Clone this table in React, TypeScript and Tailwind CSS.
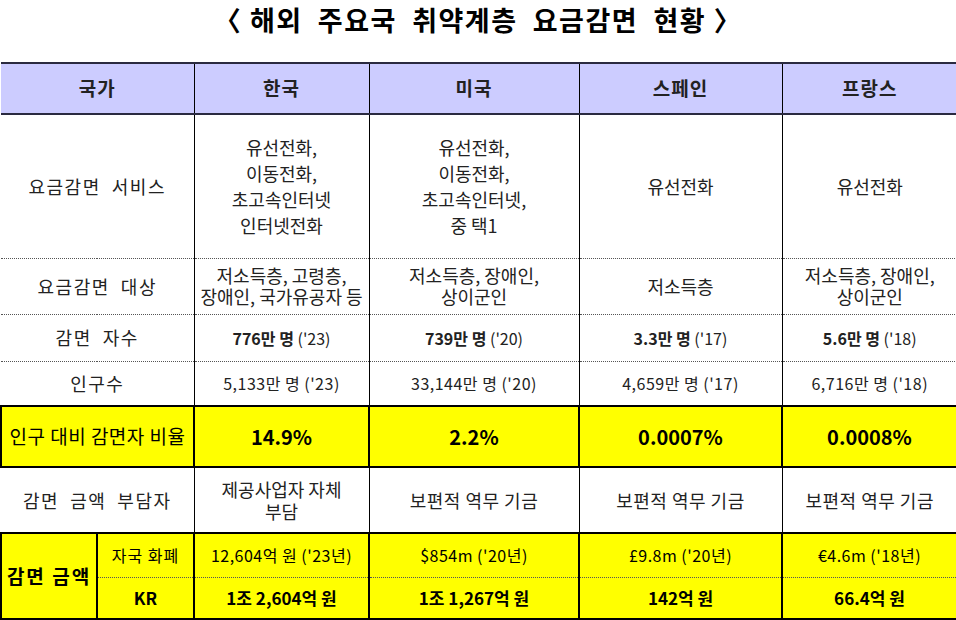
import React from 'react';

const font = { fontFamily: '"Noto Sans CJK KR", "Noto Sans", sans-serif' };

const countries = ['한국', '미국', '스페인', '프랑스'];

const App: React.FC = () => {
  const countRow = [
    { b: '776만 명', y: "('23)" },
    { b: '739만 명', y: "('20)" },
    { b: '3.3만 명', y: "('17)" },
    { b: '5.6만 명', y: "('18)" },
  ];
  const popRow = ["5,133만 명 ('23)", "33,144만 명 ('20)", "4,659만 명 ('17)", "6,716만 명 ('18)"];
  const ratioRow = ['14.9%', '2.2%', '0.0007%', '0.0008%'];
  const localRow = ["12,604억 원 ('23년)", "$854m ('20년)", "£9.8m ('20년)", "€4.6m ('18년)"];
  const krRow = ['1조 2,604억 원', '1조 1,267억 원', '142억 원', '66.4억 원'];

  return (
    <div className="w-[956px] h-[620px] bg-white text-[#222] overflow-hidden" style={font}>
      {/* Title */}
      <div className="h-[62px] flex items-start justify-center pt-[2px]">
        <h1 className="text-[27px] font-bold tracking-[1.5px] text-black leading-[36px]">
          〈 해외&nbsp; 주요국&nbsp; 취약계층&nbsp; 요금감면&nbsp; 현황 〉
        </h1>
      </div>

      <table className="w-[956px] table-fixed border-collapse text-center text-[18px]">
        <colgroup>
          <col className="w-[96px]" />
          <col className="w-[97px]" />
          <col className="w-[175px]" />
          <col className="w-[210px]" />
          <col className="w-[203px]" />
          <col className="w-[175px]" />
        </colgroup>
        <tbody>
          {/* Header */}
          <tr className="h-[51px] bg-[#ccccff] border-t-2 border-b-2 border-[#2a2a40]">
            <td colSpan={2} className="font-bold text-[19px] tracking-[1px]">국가</td>
            {countries.map((c) => (
              <td key={c} className="border-l border-black font-bold text-[19px] tracking-[1px]">{c}</td>
            ))}
          </tr>

          {/* Services */}
          <tr className="h-[144px]">
            <td colSpan={2} className="tracking-[1.5px]">요금감면&nbsp; 서비스</td>
            <td className="border-l border-black leading-[26px]">
              유선전화,<br />이동전화,<br />초고속인터넷<br />인터넷전화
            </td>
            <td className="border-l border-black leading-[26px]">
              유선전화,<br />이동전화,<br />초고속인터넷,<br />중 택1
            </td>
            <td className="border-l border-black">유선전화</td>
            <td className="border-l border-black">유선전화</td>
          </tr>

          {/* Targets */}
          <tr className="h-[56px] border-t border-dotted border-[#555]">
            <td colSpan={2} className="tracking-[1.5px]">요금감면&nbsp; 대상</td>
            <td className="border-l border-black leading-[21px] whitespace-nowrap">
              저소득층, 고령층,<br />장애인, 국가유공자 등
            </td>
            <td className="border-l border-black leading-[21px]">
              저소득층, 장애인,<br />상이군인
            </td>
            <td className="border-l border-black">저소득층</td>
            <td className="border-l border-black leading-[21px]">
              저소득층, 장애인,<br />상이군인
            </td>
          </tr>

          {/* Beneficiaries */}
          <tr className="h-[47px] border-t border-dotted border-[#555]">
            <td colSpan={2} className="tracking-[1.5px]">감면&nbsp; 자수</td>
            {countRow.map((c) => (
              <td key={c.b} className="border-l border-black text-[16px]">
                <span className="font-bold">{c.b}</span>&nbsp;{c.y}
              </td>
            ))}
          </tr>

          {/* Population */}
          <tr className="h-[45px] border-t border-dotted border-[#555]">
            <td colSpan={2} className="tracking-[1.5px]">인구수</td>
            {popRow.map((p) => (
              <td key={p} className="border-l border-black text-[16px] tracking-[0.5px]">{p}</td>
            ))}
          </tr>

          {/* Ratio */}
          <tr className="h-[61px] bg-[#ffff00]">
            <td colSpan={2} className="border-2 border-black text-[19px] whitespace-nowrap tracking-[0.5px] text-black">
              인구 대비 감면자 비율
            </td>
            {ratioRow.map((r) => (
              <td key={r} className="border-2 border-black font-bold text-[20px] text-black">{r}</td>
            ))}
          </tr>

          {/* Burden */}
          <tr className="h-[66px] border-b-2 border-black">
            <td colSpan={2} className="tracking-[1.5px]">감면&nbsp; 금액&nbsp; 부담자</td>
            <td className="border-l border-black leading-[22px]">제공사업자 자체<br />부담</td>
            <td className="border-l border-black tracking-[0.5px]">보편적 역무 기금</td>
            <td className="border-l border-black tracking-[0.5px]">보편적 역무 기금</td>
            <td className="border-l border-black tracking-[0.5px]">보편적 역무 기금</td>
          </tr>

          {/* Amount - local currency */}
          <tr className="h-[44px] bg-[#ffff00]">
            <td rowSpan={2} className="border-2 border-black font-bold text-[19px] tracking-[2px] whitespace-nowrap text-black">
              감면 금액
            </td>
            <td className="border-2 border-black border-b-0 text-[16px] tracking-[1px] text-black">자국 화폐</td>
            {localRow.map((l) => (
              <td key={l} className="border-2 border-black border-b-0 text-[16px] tracking-[0.5px] text-black">{l}</td>
            ))}
          </tr>

          {/* Amount - KRW */}
          <tr className="h-[42px] bg-[#ffff00] border-t border-dotted border-[#555]">
            <td className="border-2 border-t-0 border-black font-bold text-[17px] text-black">KR</td>
            {krRow.map((k) => (
              <td key={k} className="border-2 border-t-0 border-black font-bold text-[17px] text-black">{k}</td>
            ))}
          </tr>
        </tbody>
      </table>
    </div>
  );
};

export default App;
